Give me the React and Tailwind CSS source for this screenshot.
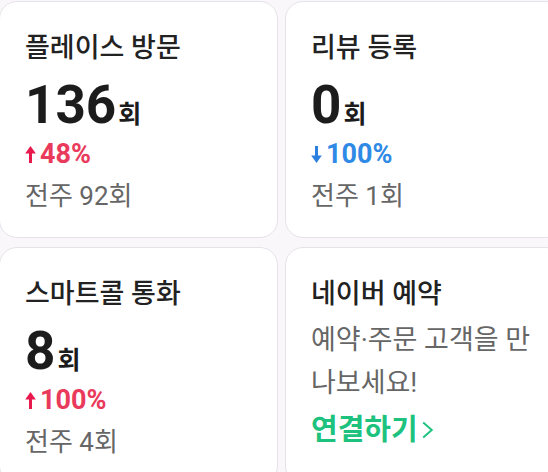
import React from 'react';

const font = { fontFamily: 'Roboto, "Noto Sans CJK KR", sans-serif' };

const Arrow = ({ up, color }) => (
    <svg width="11" height="17" viewBox="0 0 10 16" className="mr-[4px] shrink-0">
        {up ? (
            <g fill={color}>
                <rect x="3.6" y="5" width="2.8" height="11" />
                <polygon points="5,0 10,7 0,7" />
            </g>
        ) : (
            <g fill={color}>
                <rect x="3.6" y="0" width="2.8" height="11" />
                <polygon points="5,16 10,9 0,9" />
            </g>
        )}
    </svg>
);

const StatCard = ({ title, value, up, change, prev }) => (
    <div className="bg-white border-[1.5px] border-[#e6e3e8] rounded-[18px] h-[237px] pl-[25px] pt-[31px]">
        <div className="text-[27px] leading-[30px] font-medium text-[#222]">{title}</div>
        <div className="flex items-baseline mt-[16px]">
            <span className="text-[53px] leading-none font-bold text-[#1c1c1c]">{value}</span>
            <span className="text-[25px] leading-none font-bold text-[#1c1c1c] ml-[2px]">회</span>
        </div>
        <div className={`flex items-center mt-[8px] text-[27px] leading-[28px] font-bold ${up ? 'text-[#ea3a5c]' : 'text-[#2f8ae6]'}`}>
            <Arrow up={up} color={up ? '#e8194d' : '#2a80de'} />
            <span>{change}</span>
        </div>
        <div className="mt-[14px] text-[26px] leading-[28px] text-[#666]">전주 {prev}회</div>
    </div>
);

const stats = [
    { title: '플레이스 방문', value: '136', up: true, change: '48%', prev: 92 },
    { title: '리뷰 등록', value: '0', up: false, change: '100%', prev: 1 },
    { title: '스마트콜 통화', value: '8', up: true, change: '100%', prev: 4 },
];

const App = () => {
    return (
        <div className="w-[548px] h-[472px] overflow-hidden bg-[#f9f7fa]" style={font}>
            <div className="grid grid-cols-[279px_279px] gap-x-[7px] gap-y-[9px] ml-[-1px] mt-[1px]">
                {stats.map((s) => (
                    <StatCard key={s.title} {...s} />
                ))}
                <div className="bg-white border-[1.5px] border-[#e6e3e8] rounded-[18px] h-[237px] pl-[25px] pt-[31px]">
                    <div className="text-[27px] leading-[30px] font-medium text-[#222]">네이버 예약</div>
                    <div className="mt-[10px] text-[27px] leading-[43px] text-[#666]">
                        예약·주문 고객을 만<br />나보세요!
                    </div>
                    <div className="mt-[9px] flex items-center text-[29px] leading-[32px] font-bold text-[#1cc27d]">
                        연결하기
                        <svg width="15" height="20" viewBox="0 0 14 18" className="ml-[2px]">
                            <polyline points="3,2 11,9 3,16" fill="none" stroke="#1cc27d" strokeWidth="1.8" />
                        </svg>
                    </div>
                </div>
            </div>
        </div>
    );
};

export default App;
